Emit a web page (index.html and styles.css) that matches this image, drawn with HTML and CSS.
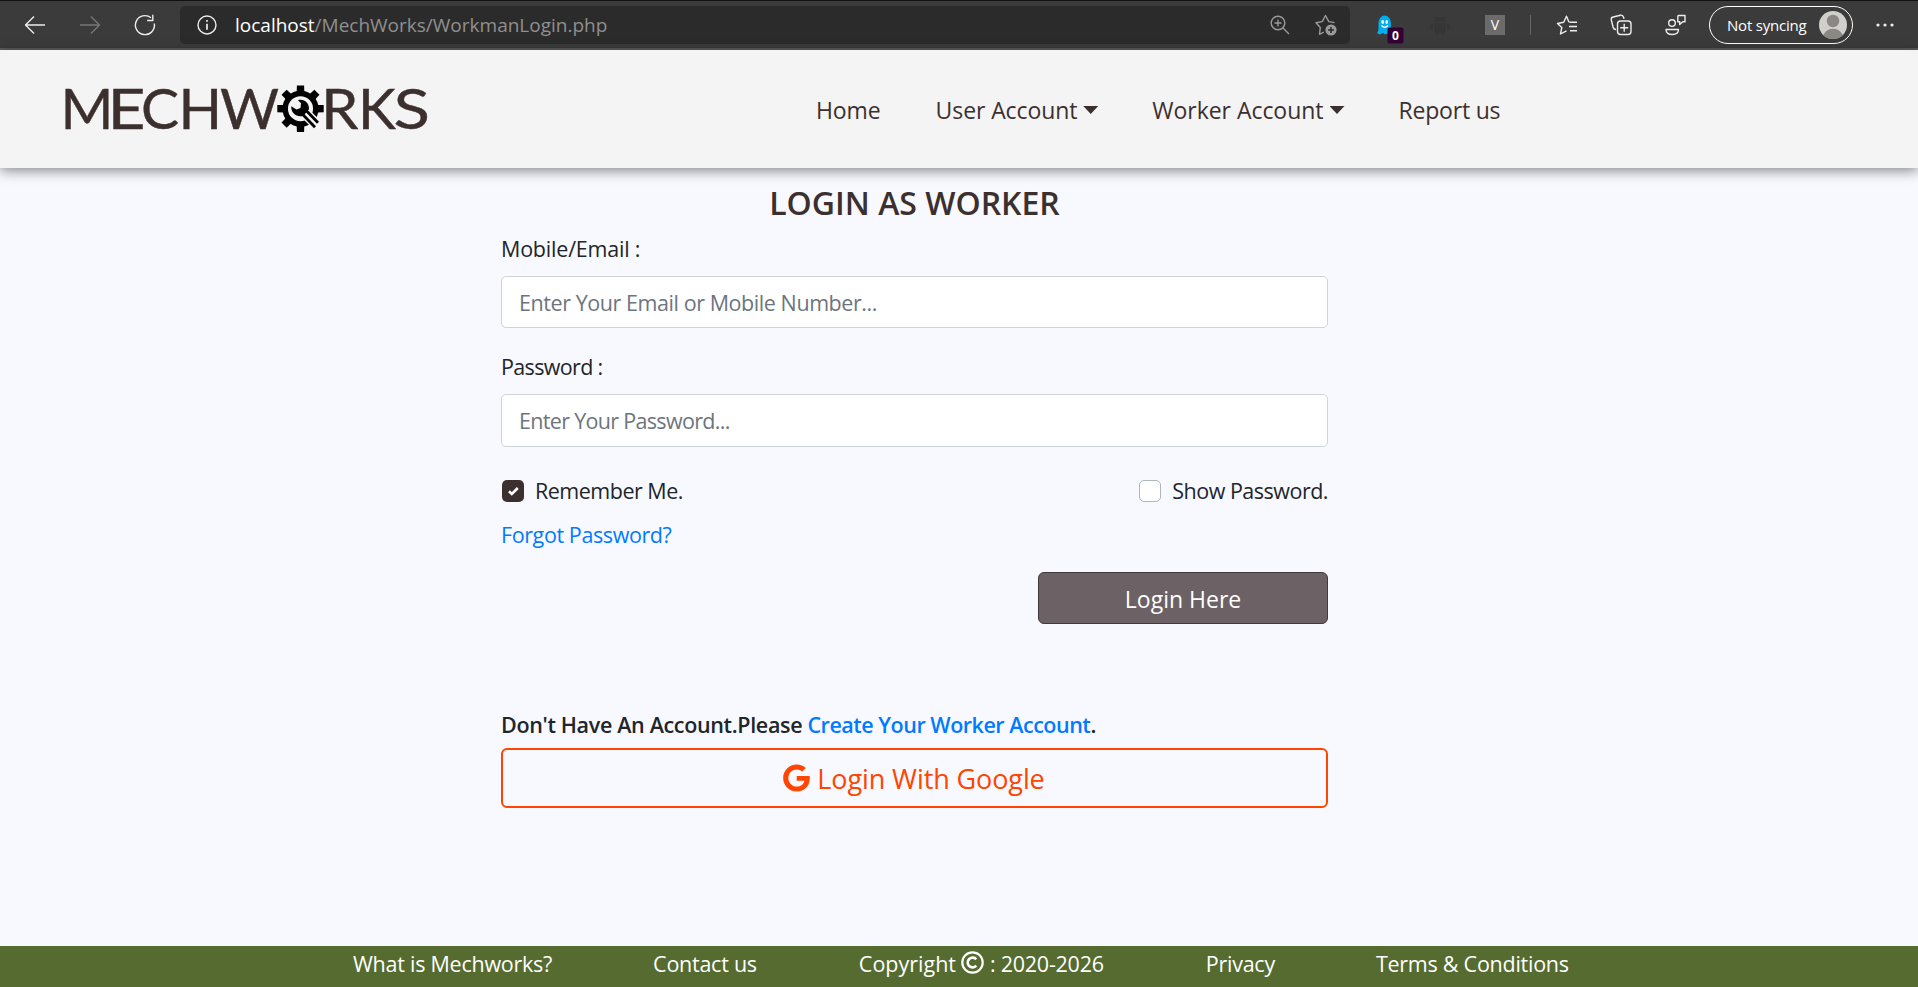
FILE: index.html
```html
<!DOCTYPE html>
<html lang="en">
<head>
<meta charset="utf-8">
<title>MechWorks - Worker Login</title>
<link rel="stylesheet" href="styles.css">
</head>
<body>
<div class="toolbar">
  <svg class="ico back" width="22" height="20" viewBox="0 0 22 20"><path d="M21 10H2M10 1.5L1.5 10l8.500 8.500"/></svg>
  <svg class="ico forward" width="22" height="20" viewBox="0 0 22 20"><path d="M1 10h19M12 1.500L20.500 10 12 18.500"/></svg>
  <svg class="ico reload" width="22" height="22" viewBox="0 0 22 22"><path d="M20.300 9.500A9.500 9.500 0 1 1 17 3.800M18.800 .8v5.700h-5.700"/></svg>
  <div class="address">
    <svg class="ico info" width="20" height="20" viewBox="0 0 20 20"><circle cx="10" cy="10" r="9"/><path d="M10 8.800v6M10 5v1.800" stroke-width="1.700"/></svg>
    <span class="url"><span class="host">localhost</span>/MechWorks/WorkmanLogin.php</span>
    <svg class="ico dim" width="20" height="20" viewBox="0 0 20 20"><circle cx="8" cy="8" r="6.800"/><path d="M13 13l6 6M8 4.500v7M4.500 8h7"/></svg>
    <svg class="ico dim addfav" width="22" height="22" viewBox="0 0 22 22"><path d="M9 18l-4.500 2.300 .8-6.800L1 8.800l6.200-1.200L10.500 1.500l3.300 6.100 5.700 1"/><circle cx="16" cy="16" r="5.600" fill="#9a9a9a" stroke="none"/><path d="M16 13v6M13 16h6" stroke="#2b2b2b" stroke-width="1.600"/></svg>
  </div>
  <svg class="ghost" width="28" height="30" viewBox="0 0 28 30"><path d="M2.500 8a6.200 7.500 0 0 1 12.400 0v9c0 1-1 2.500-2.500 1l-3 1.500-2.500-1.500-3 1.500L1 18.300c1.500-2 1.500-4 1.500-6z" fill="#00aef0"/><ellipse cx="6.700" cy="7" rx="1.300" ry="2" fill="#fff"/><ellipse cx="10.700" cy="7" rx="1.300" ry="2" fill="#fff"/><path d="M5.500 10.500q3.200 3.500 6.400 0" stroke="#fff" fill="none" stroke-width="1.300"/><rect x="11.500" y="12.500" width="16" height="16" rx="2" fill="#330036"/><text x="19.500" y="25" class="badge">0</text></svg>
  <svg class="android" width="20" height="20" viewBox="0 0 20 20"><path d="M4 7a6 5 0 0 1 12 0zM4 8h12v8a2 2 0 0 1-2 2H6a2 2 0 0 1-2-2zM0 9h2.800v6H0zM17.200 9H20v6h-2.800zM6 17h2.500v3H6zM11.500 17H14v3h-2.500z" fill="#363636"/><path d="M5 0l2 3M15 0l-2 3" stroke="#363636"/></svg>
  <span class="vbox">V</span>
  <span class="divider"></span>
  <svg class="ico favs" width="22" height="22" viewBox="0 0 22 22"><path d="M13 8.200l-2.500-6-2.800 6L1.500 9.500 5.800 13.500 4.500 20l6-3.200M13.500 8.300H21M13 12.500h8M14 16.800h7"/></svg>
  <svg class="ico coll" width="22" height="22" viewBox="0 0 22 22"><path d="M6 15.500c-1.800 0-2.500-.8-2.800-2L1.300 6c-.3-1.500.5-2.700 1.800-3l7.300-1.800c1.600-.3 2.700.4 3.200 2l.4 1.500"/><rect x="7.500" y="7" width="13.500" height="13.500" rx="3"/><path d="M14.200 9.800v8M10.200 13.800h8"/></svg>
  <svg class="ico feed" width="22" height="22" viewBox="0 0 22 22"><circle cx="7" cy="9" r="3.300"/><path d="M1 15.500h12.500c0 3.500-2.500 5-6.200 5S1 19 1 15.500zM13.500 1.500h6.500v6.300h-2.300l-3 2.700V7.800h-1.900V3.500c0-1.300.3-2 .7-2z"/></svg>
  <div class="profile">
    <span class="sync">Not syncing</span>
    <svg width="28" height="28" viewBox="0 0 28 28"><defs><clipPath id="av"><circle cx="14" cy="14" r="14"/></clipPath></defs><g clip-path="url(#av)"><rect width="28" height="28" fill="#d0cfcb"/><circle cx="14" cy="10" r="6.200" fill="#8b8783"/><ellipse cx="14" cy="25.500" rx="9.500" ry="7.800" fill="#8b8783"/></g></svg>
  </div>
  <svg class="dots" width="20" height="4" viewBox="0 0 20 4"><g fill="#eee"><circle cx="2" cy="2" r="1.600"/><circle cx="9" cy="2" r="1.600"/><circle cx="16" cy="2" r="1.600"/></g></svg>
</div>

<header class="navbar">
  <svg class="logo" width="366" height="50" viewBox="0 0 366 50">
    <g class="logo-text">
      <text y="43.500" x="-4.500">M</text>
      <text y="43.500" x="42.500" textLength="38" lengthAdjust="spacingAndGlyphs">E</text>
      <text y="43.500" x="76 113.500 155">CHW</text>
      <text y="43.500" x="256" textLength="37.500" lengthAdjust="spacingAndGlyphs">R</text>
      <text y="43.500" x="293">K</text>
      <text y="43.500" x="328.500" textLength="36.500" lengthAdjust="spacingAndGlyphs">S</text>
    </g>
    <g transform="translate(235.500 23.700)">
      <circle r="15.300" fill="none" stroke="#000" stroke-width="5.500"/>
      <path id="tooth" d="M-3.800-16.500L-3.600-23.200H3.600L3.800-16.500z"/><use href="#tooth" transform="rotate(45)"/><use href="#tooth" transform="rotate(90)"/><use href="#tooth" transform="rotate(180)"/><use href="#tooth" transform="rotate(225)"/><use href="#tooth" transform="rotate(270)"/><use href="#tooth" transform="rotate(315)"/>
      <path d="M4 4L20 20" stroke="#f4f4f4" stroke-width="11"/>
      <path d="M-2.500-8.500C3-10.500 9-6 8.500 0.500L3 7C-3 9-9.500 5-9.300-2.500l5.300 3.300 4-1.600.5-4.700z"/>
      <path d="M4.500 0.500L17.500 14M2.500 6L14.500 18.500" stroke="#000" stroke-width="2.800"/>
    </g>
  </svg>
  <nav class="menu">
    <a class="m1">Home</a>
    <a class="m2">User Account</a><i class="caret"></i>
    <a class="m3">Worker Account</a><i class="caret"></i>
    <a class="m4">Report us</a>
  </nav>
</header>

<main class="login">
  <h1>LOGIN AS WORKER</h1>
  <label class="line first">Mobile/Email :</label>
  <div class="field email">Enter Your Email or Mobile Number...</div>
  <label class="line second">Password :</label>
  <div class="field password">Enter Your Password...</div>
  <div class="line options">
    <label class="option"><span class="box checked"><svg width="22" height="22" viewBox="0 0 22 22"><path d="M7 11.200l2.800 2.700L15.800 8" fill="none" stroke="#fff" stroke-width="2.600"/></svg></span>Remember Me.</label>
    <label class="option"><span class="box"></span>Show Password.</label>
  </div>
  <a class="line forgot">Forgot Password?</a>
  <button class="submit">Login Here</button>
  <p class="line signup">Don't Have An Account.Please <a>Create Your Worker Account</a>.</p>
  <button class="google">
    <svg width="27" height="28" viewBox="0 0 488 512"><path fill="#ff4500" d="M488 261.800C488 403.300 391.100 504 248 504 110.800 504 0 393.200 0 256S110.800 8 248 8c66.800 0 123 24.500 166.300 64.900l-67.500 64.900C258.500 52.600 94.300 116.600 94.300 256c0 86.500 69.100 156.600 153.700 156.600 98.200 0 135-70.400 140.800-106.900H248v-85.300h236.100c2.300 12.700 3.900 24.900 3.900 41.400z"/></svg>
    <span>Login With Google</span>
  </button>
</main>

<footer class="footer">
  <a class="f1">What is Mechworks?</a>
  <a class="f2">Contact us</a>
  <span class="f3">Copyright</span>
  <svg width="23" height="23" viewBox="0 0 23 23"><circle cx="11.500" cy="11.500" r="10.200" fill="none" stroke="#fff" stroke-width="2.200"/><path d="M15.300 8.300a4.900 4.900 0 1 0 0 6.400" fill="none" stroke="#fff" stroke-width="2.600"/></svg>
  <span class="f4">: 2020-2026</span>
  <a class="f5">Privacy</a>
  <a class="f6">Terms &amp; Conditions</a>
</footer>
</body>
</html>
```
FILE: styles.css
```css
* { box-sizing: border-box; }
body {
  margin: 0;
  width: 1918px;
  height: 987px;
  overflow: hidden;
  display: flex;
  flex-direction: column;
  background: #f8f9ff;
  color: #212529;
  font: 21.5px/34px "Open Sans", "Noto Sans", sans-serif;
  white-space: nowrap;
}
svg { display: block; flex: none; overflow: visible; }

.toolbar {
  flex: none;
  height: 50px;
  display: flex;
  align-items: center;
  background: #3b3b3b;
  border-top: 1px solid #111;
  border-bottom: 2px solid #5b5b5b;
  padding-left: 24px;
}
.ico { fill: none; stroke: #ededed; stroke-width: 1.4; stroke-linejoin: round; }
.forward { margin-left: 33px; stroke: #777; }
.reload { margin-left: 33px; }
.address {
  margin-left: 24px;
  width: 1170px;
  height: 38px;
  border-radius: 5px;
  background: #2b2b2b;
  display: flex;
  align-items: center;
  padding: 0 13px 0 17px;
}
.url { margin-left: 18px; margin-right: auto; font-size: 19px; color: #909090; }
.host { color: #fff; }
.dim { stroke: #9a9a9a; }
.addfav { margin-left: 25px; }
.ghost { margin: 10px 0 0 26px; }
.badge { font: 700 12px "Open Sans", sans-serif; fill: #fff; text-anchor: middle; }
.android { margin-left: 26px; }
.vbox { margin-left: 35px; width: 20px; height: 20px; background: #6b6b6b; color: #fff; font-size: 14px; line-height: 20px; text-align: center; }
.divider { margin-left: 25px; width: 1px; height: 20px; background: #666; }
.favs { margin-left: 25px; }
.coll { margin-left: 32px; }
.feed { margin-left: 33px; }
.profile {
  margin-left: 22px;
  width: 144px;
  height: 38px;
  border: 1.5px solid #fff;
  border-radius: 19px;
  display: flex;
  align-items: center;
  justify-content: space-between;
  padding: 0 5px 0 17px;
}
.sync { color: #fff; font-size: 15px; letter-spacing: -.2px; }
.dots { margin-left: 23px; }

.navbar {
  flex: none;
  height: 118px;
  display: flex;
  background: #f4f4f4;
  box-shadow: 0 3px 12px rgba(0, 0, 0, .45);
  padding-left: 65px;
}
.logo { margin-top: 35px; }
.logo-text { font: 57px Lato, sans-serif; fill: #3c302f; stroke: #3c302f; stroke-width: .4px; }
.menu { display: flex; margin: 43px 0 0 385px; font-size: 23px; line-height: 35px; color: #3c302f; letter-spacing: -.1px; }
.caret { width: 15px; height: 8px; margin: 13px 0 0 6px; background: #3c302f; clip-path: polygon(0 0, 100% 0, 50% 100%); }
.m2 { margin-left: 55px; }
.m3 { margin-left: 54px; letter-spacing: -.03px; }
.m4 { margin-left: 54px; letter-spacing: -.2px; }

.login { width: 827px; margin-left: 501px; padding-top: 15px; flex: 1; display: flex; flex-direction: column; }
h1 { margin: 0; font-size: 32px; line-height: 40px; font-weight: 600; text-align: center; color: #3c302f; }
.line { height: 34px; line-height: 36px; }
.first { margin-top: 8px; letter-spacing: -.2px; }
.second { margin-top: 21px; letter-spacing: -.66px; }
.field { margin-top: 11px; height: 52px; border: 1px solid #ced4da; border-radius: 5px; background: #fff; color: #6c757d; padding: 9px 17px 0; }
.email { letter-spacing: -.43px; }
.password { height: 53px; letter-spacing: -.68px; }
.options { display: flex; justify-content: space-between; margin-top: 26px; letter-spacing: -.5px; }
.option { display: flex; }
.box { width: 22px; height: 22px; margin: 7px 11px 0 1px; border: 1px solid #adb5bd; border-radius: 5px; background: #fff; }
.box.checked { border: 0; background: #3c302f; }
.forgot { margin-top: 10px; color: #007bff; letter-spacing: -.4px; }
button { font-family: inherit; }
.submit { align-self: flex-end; margin-top: 21px; width: 290px; height: 52px; border: 1px solid #403a3d; border-radius: 6px; background: #6c6265; color: #fff; font-size: 23px; padding: 2px 0 0; }
.signup { margin: 83px 0 0; font-weight: 600; letter-spacing: -.34px; }
.signup a { color: #007bff; letter-spacing: -.48px; }
.google { margin-top: 7px; height: 60px; border: 2px solid #ff4500; border-radius: 6px; background: none; color: #ff4500; font-size: 27px; letter-spacing: -.1px; padding: 0 1px 0 0; display: flex; align-items: center; justify-content: center; gap: 7px; }

.footer { flex: none; height: 41px; padding-left: 353px; background: #556b2f; color: #fff; display: flex; line-height: 35px; letter-spacing: -.25px; }
.footer svg { margin: 5px 6px 0 5px; }
.f2 { margin-left: 101px; }
.f3 { margin-left: 102px; letter-spacing: 0; }
.f5 { margin-left: 102px; }
.f6 { margin-left: 101px; }
```
